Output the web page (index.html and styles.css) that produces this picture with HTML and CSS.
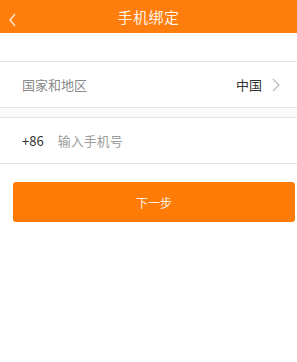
FILE: index.html
```html
<!DOCTYPE html>
<html lang="zh-CN">
<head>
    <meta charset="UTF-8">
    <meta name="viewport" content="width=device-width, initial-scale=1.0">
    <title>手机绑定</title>
    <link rel="stylesheet" href="styles.css">
</head>
<body>
    <div class="header">
        <span class="back">
            <svg width="10" height="14" viewBox="0 0 10 14"><path d="M7 1 L2 7 L7 13" fill="none" stroke="#ffe9d6" stroke-width="1.4"/></svg>
        </span>
        <h1>手机绑定</h1>
    </div>

    <div class="spacer"></div>

    <div class="row">
        <span class="label">国家和地区</span>
        <span class="value">中国</span>
        <svg class="arrow" width="8" height="14" viewBox="0 0 8 14"><path d="M1 1 L7 7 L1 13" fill="none" stroke="#b5b5b5" stroke-width="1.1"/></svg>
    </div>

    <div class="gap"></div>

    <div class="row">
        <span class="code">+86</span>
        <input class="phone" type="tel" placeholder="输入手机号">
    </div>

    <button class="next" type="button">下一步</button>
</body>
</html>
```

FILE: styles.css
```css
body {
    margin: 0;
    background-color: #ffffff;
    font-family: "Noto Sans CJK SC", "Noto Sans", sans-serif;
}
.header {
    height: 33px;
    background-color: #ff7d0c;
    display: flex;
    align-items: center;
    justify-content: center;
    position: relative;
}
.header h1 {
    margin: 0;
    font-size: 15px;
    font-weight: normal;
    color: #fff3e6;
    letter-spacing: 0.5px;
}
.back {
    position: absolute;
    left: 8px;
    top: 8px;
}
.spacer {
    height: 28px;
    border-bottom: 1px solid #e3e3e5;
}
.row {
    height: 45px;
    display: flex;
    align-items: center;
    padding: 0 17px 0 22px;
    border-bottom: 1px solid #e3e3e5;
    font-size: 13px;
}
.gap {
    height: 9px;
    border-bottom: 1px solid #e6e6e8;
    background-color: #fbfbfc;
}
.label {
    color: #8a8a8a;
    flex: 1;
}
.value {
    color: #333333;
    margin-right: 10px;
}
.code {
    color: #333333;
    margin-right: 14px;
}
.phone {
    border: none;
    outline: none;
    padding: 0;
    font-family: inherit;
    font-size: 13px;
    flex: 1;
}
.phone::placeholder {
    color: #9c9c9c;
}
.next {
    display: block;
    margin: 18px 2px 0 13px;
    width: 282px;
    height: 40px;
    border: none;
    border-radius: 3px;
    background-color: #ff7b08;
    color: #fff0e0;
    font-family: inherit;
    font-size: 12px;
}
```
